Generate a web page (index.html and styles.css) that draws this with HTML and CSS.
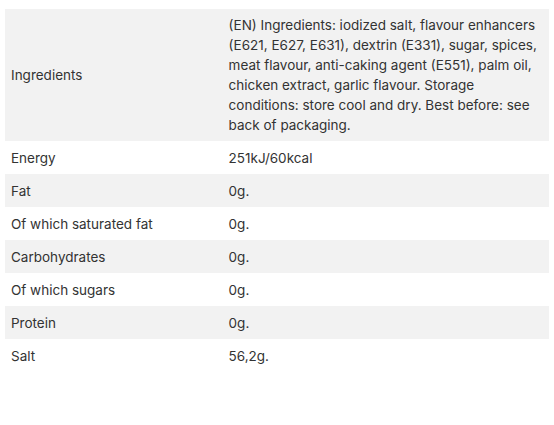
FILE: index.html
```html
<!DOCTYPE html>
<html>
<head>
<meta charset="utf-8">
<link rel="stylesheet" href="styles.css">
</head>
<body>
<div class="wrap">
<table class="nutri">
<tbody>
<tr class="alt"><td class="label">Ingredients</td><td class="value">(EN) Ingredients: iodized salt, flavour enhancers<br>(E621, E627, E631), dextrin (E331), sugar, spices,<br>meat flavour, anti-caking agent (E551), palm oil,<br>chicken extract, garlic flavour. Storage<br>conditions: store cool and dry. Best before: see<br>back of packaging.</td></tr>
<tr><td class="label">Energy</td><td class="value">251kJ/60kcal</td></tr>
<tr class="alt"><td class="label">Fat</td><td class="value">0g.</td></tr>
<tr><td class="label">Of which saturated fat</td><td class="value">0g.</td></tr>
<tr class="alt"><td class="label">Carbohydrates</td><td class="value">0g.</td></tr>
<tr><td class="label">Of which sugars</td><td class="value">0g.</td></tr>
<tr class="alt"><td class="label">Protein</td><td class="value">0g.</td></tr>
<tr><td class="label">Salt</td><td class="value">56,2g.</td></tr>
</tbody>
</table>
</div>
</body>
</html>
```
FILE: styles.css
```css
html, body {
  margin: 0;
  padding: 0;
  background: #ffffff;
}
.wrap {
  padding: 9px 5px 0 5px;
}
.nutri {
  width: 100%;
  border-collapse: collapse;
  font-family: Inter, "Open Sans", sans-serif;
  font-size: 13.5px;
  color: #333333;
}
.nutri td {
  padding: 6px 6px;
  line-height: 20px;
  vertical-align: middle;
  white-space: nowrap;
}
.nutri tr + tr td {
  padding-top: 6.5px;
  padding-bottom: 6.5px;
}
.nutri .label {
  width: 40%;
}
.nutri tr.alt td {
  background: #f2f2f2;
}
```
